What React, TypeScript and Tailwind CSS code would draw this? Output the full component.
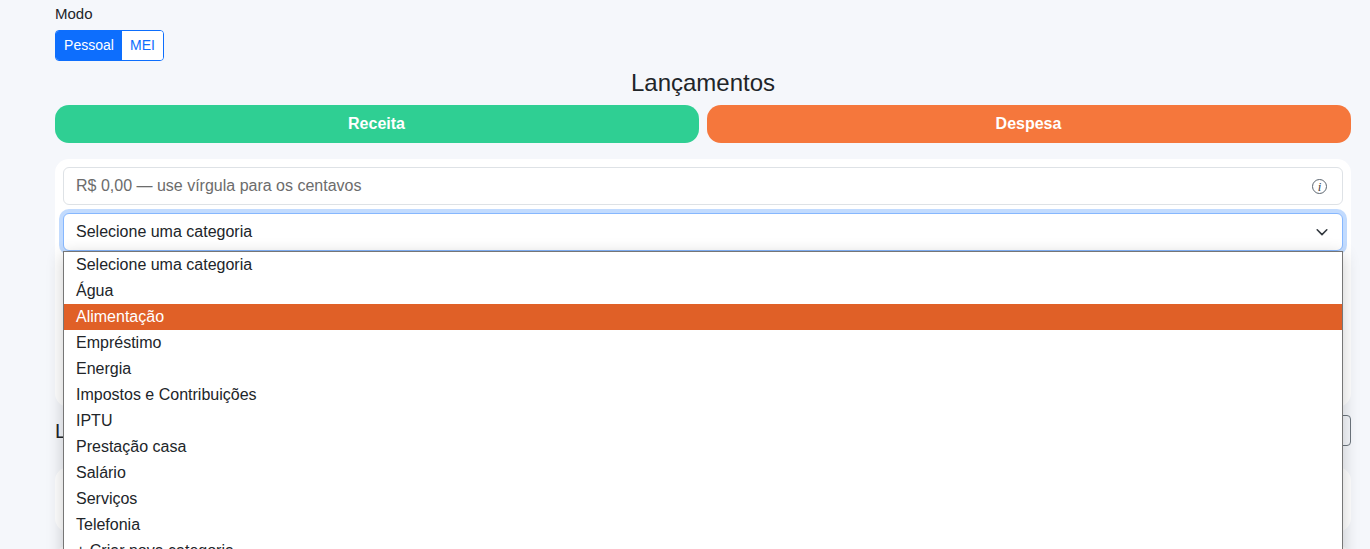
const categorias = [
  "Selecione uma categoria",
  "Água",
  "Alimentação",
  "Empréstimo",
  "Energia",
  "Impostos e Contribuições",
  "IPTU",
  "Prestação casa",
  "Salário",
  "Serviços",
  "Telefonia",
  "+ Criar nova categoria",
];

export default function App() {
  return (
    <div className="h-[549px] overflow-hidden bg-[#f5f7fb] pl-[55px] pr-[19px] font-['Liberation_Sans',Arial,sans-serif] text-[#212529]">
      <div className="flex flex-col">
        {/* Modo */}
        <label className="mt-[5px] h-[17px] text-[15px] leading-[17px]">Modo</label>
        <div className="mt-[8px] flex h-[31px] w-[109px] overflow-hidden rounded-[4px] border border-[#0d6efd] text-[14px]">
          <button className="w-[66px] bg-[#0d6efd] text-white">Pessoal</button>
          <button className="flex-1 bg-white text-[#0d6efd]">MEI</button>
        </div>

        <h2 className="mt-[7px] h-[29px] text-center text-[24px] leading-[29px]">Lançamentos</h2>

        {/* Receita / Despesa */}
        <div className="mt-[8px] grid grid-cols-2 gap-[8px]">
          <button className="h-[38px] rounded-[14px] bg-[#2fcf93] pr-[1px] text-[16px] font-bold text-white">Receita</button>
          <button className="h-[38px] rounded-[14px] bg-[#f5773c] pr-[1px] text-[16px] font-bold text-white">Despesa</button>
        </div>

        {/* Form */}
        <div className="mt-[16px] h-[248px] rounded-[14px] bg-white p-[8px]">
          <div className="flex h-[38px] items-center justify-between rounded-[6px] border border-[#dee2e6] bg-white pl-[12px] pr-[15px] text-[16px] text-[#6c6c6c]">
            <span>R$ 0,00 — use vírgula para os centavos</span>
            <span className="flex h-[15px] w-[15px] items-center justify-center rounded-full border border-[#5c6670] font-['Liberation_Serif',serif] text-[13px] italic leading-none text-[#444]">
              i
            </span>
          </div>

          <div className="relative mt-[8px]">
            <div className="flex h-[38px] items-center justify-between rounded-[6px] border border-[#86b7fe] bg-white pl-[12px] pr-[14px] text-[16px] shadow-[0_0_0_4px_rgba(13,110,253,0.25)]">
              <span>Selecione uma categoria</span>
              <svg width="12" height="12" viewBox="0 0 12 12" fill="none" stroke="#343a40" strokeWidth="1.6" strokeLinecap="round" strokeLinejoin="round">
                <path d="m1.2 3.8 4.8 4.8 4.8-4.8" />
              </svg>
            </div>

            {/* Opened list */}
            <ul className="absolute left-0 right-0 top-[38px] z-10 border border-[#767676] bg-white text-[16px] leading-[26px] shadow-[0_4px_16px_rgba(0,0,0,0.2)]">
              {categorias.map((c) => (
                <li
                  key={c}
                  className={
                    c === "Alimentação"
                      ? "h-[26px] bg-[#e06027] pl-[12px] text-white"
                      : "h-[26px] pl-[12px]"
                  }
                >
                  {c}
                </li>
              ))}
            </ul>
          </div>
        </div>

        {/* Lista atrás do menu aberto */}
        <div className="mt-[8px] flex h-[31px] items-center justify-between">
          <h3 className="text-[20px]">L</h3>
          <button className="h-[31px] w-[40px] rounded-[4px] border border-[#6c757d]" />
        </div>
        <div className="mt-[21px] h-[65px] rounded-[14px] bg-white" />
        <div className="mt-[13px] h-[64px] rounded-[14px] bg-white" />
      </div>
    </div>
  );
}
